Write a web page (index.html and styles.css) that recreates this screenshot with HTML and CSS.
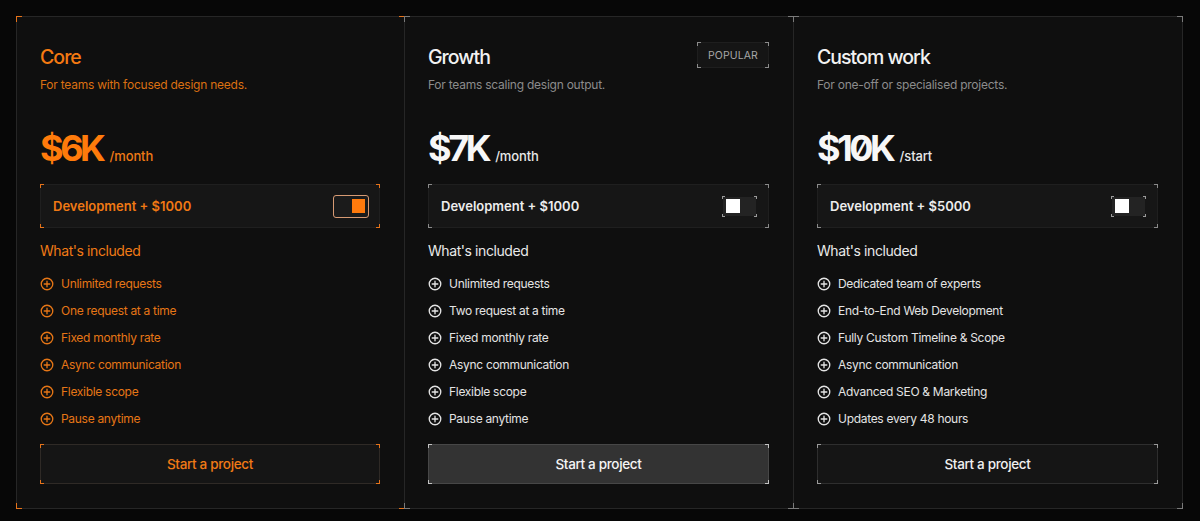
FILE: index.html
```html
<!DOCTYPE html>
<html lang="en">
<head>
<meta charset="utf-8">
<title>Pricing</title>
<link rel="stylesheet" href="styles.css">
</head>
<body>
<main class="pricing">
  <section class="card card-core ticks">
    <header class="card-head">
      <div class="head-text">
        <h2 class="title">Core</h2>
        <p class="sub">For teams with focused design needs.</p>
      </div>
    </header>
    <div class="price"><span class="amount">$6K</span><span class="per">/month</span></div>
    <div class="addon ticks"><span class="addon-label">Development + $1000</span><span class="toggle toggle-on"><span class="knob"></span></span></div>
    <h3 class="inc">What's included</h3>
    <ul class="features">
      <li><svg class="ico" viewBox="0 0 16 16"><circle cx="8" cy="8" r="6.6"/><path d="M8 4.8v6.4M4.8 8h6.4"/></svg>Unlimited requests</li>
      <li><svg class="ico" viewBox="0 0 16 16"><circle cx="8" cy="8" r="6.6"/><path d="M8 4.8v6.4M4.8 8h6.4"/></svg>One request at a time</li>
      <li><svg class="ico" viewBox="0 0 16 16"><circle cx="8" cy="8" r="6.6"/><path d="M8 4.8v6.4M4.8 8h6.4"/></svg>Fixed monthly rate</li>
      <li><svg class="ico" viewBox="0 0 16 16"><circle cx="8" cy="8" r="6.6"/><path d="M8 4.8v6.4M4.8 8h6.4"/></svg>Async communication</li>
      <li><svg class="ico" viewBox="0 0 16 16"><circle cx="8" cy="8" r="6.6"/><path d="M8 4.8v6.4M4.8 8h6.4"/></svg>Flexible scope</li>
      <li><svg class="ico" viewBox="0 0 16 16"><circle cx="8" cy="8" r="6.6"/><path d="M8 4.8v6.4M4.8 8h6.4"/></svg>Pause anytime</li>
    </ul>
    <button class="cta ticks">Start a project</button>
  </section>

  <section class="card card-growth ticks">
    <header class="card-head">
      <div class="head-text">
        <h2 class="title">Growth</h2>
        <p class="sub">For teams scaling design output.</p>
      </div>
      <span class="badge ticks">POPULAR</span>
    </header>
    <div class="price"><span class="amount">$7K</span><span class="per">/month</span></div>
    <div class="addon ticks"><span class="addon-label">Development + $1000</span><span class="toggle ticks"><span class="knob"></span></span></div>
    <h3 class="inc">What's included</h3>
    <ul class="features">
      <li><svg class="ico" viewBox="0 0 16 16"><circle cx="8" cy="8" r="6.6"/><path d="M8 4.8v6.4M4.8 8h6.4"/></svg>Unlimited requests</li>
      <li><svg class="ico" viewBox="0 0 16 16"><circle cx="8" cy="8" r="6.6"/><path d="M8 4.8v6.4M4.8 8h6.4"/></svg>Two request at a time</li>
      <li><svg class="ico" viewBox="0 0 16 16"><circle cx="8" cy="8" r="6.6"/><path d="M8 4.8v6.4M4.8 8h6.4"/></svg>Fixed monthly rate</li>
      <li><svg class="ico" viewBox="0 0 16 16"><circle cx="8" cy="8" r="6.6"/><path d="M8 4.8v6.4M4.8 8h6.4"/></svg>Async communication</li>
      <li><svg class="ico" viewBox="0 0 16 16"><circle cx="8" cy="8" r="6.6"/><path d="M8 4.8v6.4M4.8 8h6.4"/></svg>Flexible scope</li>
      <li><svg class="ico" viewBox="0 0 16 16"><circle cx="8" cy="8" r="6.6"/><path d="M8 4.8v6.4M4.8 8h6.4"/></svg>Pause anytime</li>
    </ul>
    <button class="cta cta-strong ticks">Start a project</button>
  </section>

  <section class="card card-custom ticks">
    <header class="card-head">
      <div class="head-text">
        <h2 class="title">Custom work</h2>
        <p class="sub">For one-off or specialised projects.</p>
      </div>
    </header>
    <div class="price"><span class="amount amount-zero">$10K</span><span class="per">/start</span></div>
    <div class="addon ticks"><span class="addon-label">Development + $5000</span><span class="toggle ticks"><span class="knob"></span></span></div>
    <h3 class="inc">What's included</h3>
    <ul class="features">
      <li><svg class="ico" viewBox="0 0 16 16"><circle cx="8" cy="8" r="6.6"/><path d="M8 4.8v6.4M4.8 8h6.4"/></svg>Dedicated team of experts</li>
      <li><svg class="ico" viewBox="0 0 16 16"><circle cx="8" cy="8" r="6.6"/><path d="M8 4.8v6.4M4.8 8h6.4"/></svg>End-to-End Web Development</li>
      <li><svg class="ico" viewBox="0 0 16 16"><circle cx="8" cy="8" r="6.6"/><path d="M8 4.8v6.4M4.8 8h6.4"/></svg>Fully Custom Timeline &amp; Scope</li>
      <li><svg class="ico" viewBox="0 0 16 16"><circle cx="8" cy="8" r="6.6"/><path d="M8 4.8v6.4M4.8 8h6.4"/></svg>Async communication</li>
      <li><svg class="ico" viewBox="0 0 16 16"><circle cx="8" cy="8" r="6.6"/><path d="M8 4.8v6.4M4.8 8h6.4"/></svg>Advanced SEO &amp; Marketing</li>
      <li><svg class="ico" viewBox="0 0 16 16"><circle cx="8" cy="8" r="6.6"/><path d="M8 4.8v6.4M4.8 8h6.4"/></svg>Updates every 48 hours</li>
    </ul>
    <button class="cta ticks">Start a project</button>
  </section>
</main>
</body>
</html>
```

FILE: styles.css
```css
* { box-sizing: border-box; }

html, body {
  margin: 0;
  padding: 0;
  background: #070707;
}

body {
  font-family: Inter, "Liberation Sans", sans-serif;
  color: #ececec;
  height: 521px;
  overflow: hidden;
}

.pricing {
  display: grid;
  grid-template-columns: repeat(3, 1fr);
  width: 1167px;
  padding: 0;
  margin: 16px 0 0 16px;
}

/* corner tick marks */
.ticks { position: relative; --tc: #8a8a8a; --tl: 5px; }
.ticks::after {
  content: "";
  position: absolute;
  inset: -1px;
  pointer-events: none;
  background:
    linear-gradient(var(--tc), var(--tc)) left top / var(--tl) 1px,
    linear-gradient(var(--tc), var(--tc)) left top / 1px var(--tl),
    linear-gradient(var(--tc), var(--tc)) right top / var(--tl) 1px,
    linear-gradient(var(--tc), var(--tc)) right top / 1px var(--tl),
    linear-gradient(var(--tc), var(--tc)) left bottom / var(--tl) 1px,
    linear-gradient(var(--tc), var(--tc)) left bottom / 1px var(--tl),
    linear-gradient(var(--tc), var(--tc)) right bottom / var(--tl) 1px,
    linear-gradient(var(--tc), var(--tc)) right bottom / 1px var(--tl);
  background-repeat: no-repeat;
}

.card {
  height: 493px;
  background: #0f0f0f;
  border: 1px solid #262626;
  padding: 25px 24px 24px 23px;
  display: flex;
  flex-direction: column;
  --tc: #7a7a7a;
  --tl: 6px;
}
.card + .card { margin-left: -1px; }

.card-core { --tc: #e5731a; }

.card-head {
  display: flex;
  justify-content: space-between;
  align-items: flex-start;
}

.title {
  margin: 3px 0 0;
  font-size: 19.5px;
  line-height: 24px;
  font-weight: 500;
  letter-spacing: -0.05em;
  color: #f2f2f2;
}

.sub {
  margin: 8px 0 0;
  font-size: 12px;
  line-height: 16px;
  font-weight: 400;
  letter-spacing: -0.02em;
  color: #8c8c8c;
}

.badge {
  width: 72px;
  height: 26px;
  display: flex;
  align-items: center;
  justify-content: center;
  background: #151515;
  border: 1px solid #1e1e1e;
  font-size: 10.5px;
  letter-spacing: 0.01em;
  color: #a6a6a6;
  --tc: #8c8c8c;
  --tl: 4px;
}

.price {
  margin-top: 35px;
  display: flex;
  align-items: baseline;
  height: 40px;
  line-height: 40px;
}
.amount {
  font-size: 36px;
  font-weight: 700;
  letter-spacing: -0.095em;
  color: #f7f7f7;
}
.amount-zero { font-feature-settings: "zero" 1; }
.per {
  margin-left: 7px;
  font-size: 13px;
  font-weight: 500;
  letter-spacing: -0.01em;
  color: #e8e8e8;
}

.addon {
  margin-top: 16px;
  height: 44px;
  display: flex;
  align-items: center;
  justify-content: space-between;
  padding: 0 12px 0 12px;
  background: #161616;
  border: 1px solid #1f1f1f;
  --tc: #8a8a8a;
  --tl: 4px;
}
.addon-label {
  font-family: Inter, "Liberation Sans", sans-serif;
  font-weight: 600;
  font-size: 13px;
  color: #ededed;
  letter-spacing: 0;
}

.toggle {
  width: 33px;
  height: 19px;
  margin-right: 0;
  background: #232323;
  display: flex;
  align-items: center;
  padding: 0 0 0 3px;
  --tc: #9a9a9a;
  --tl: 3px;
}
.toggle .knob {
  width: 14px;
  height: 14px;
  background: #ffffff;
}
.toggle-on {
  width: 36px;
  height: 23px;
  margin-right: -2px;
  border: 1.5px solid #d79a73;
  border-radius: 3px;
  background: #1b1b1b;
  justify-content: flex-end;
  padding: 0 3px 0 0;
}
.toggle-on .knob {
  width: 13px;
  height: 14px;
  background: #ff7a0c;
}

.inc {
  margin: 14px 0 0;
  font-size: 14px;
  line-height: 18px;
  font-weight: 400;
  letter-spacing: -0.03em;
  color: #e9e9e9;
}

.features {
  list-style: none;
  margin: 10px 0 0;
  padding: 0;
}
.features li {
  display: flex;
  align-items: center;
  height: 27px;
  font-size: 12px;
  letter-spacing: -0.025em;
  color: #e4e4e4;
}
.ico {
  width: 14px;
  height: 14px;
  margin: 0 7px 0 0;
  fill: none;
  stroke: currentColor;
  stroke-width: 1.5;
  stroke-linecap: round;
}

.cta {
  margin-top: auto;
  height: 40px;
  width: 100%;
  background: #151515;
  border: 1px solid #2e2e2e;
  color: #f0f0f0;
  font-family: Inter, "Liberation Sans", sans-serif;
  font-size: 13.5px;
  font-weight: 550;
  letter-spacing: -0.025em;
  cursor: pointer;
  --tc: #9a9a9a;
  --tl: 4px;
}
.cta-strong {
  background: #333333;
  border-color: #474747;
  color: #f5f5f5;
  --tc: #c4c4c4;
}

/* Core (highlighted in orange) */
.card-core .title { color: #f47a12; }
.card-core .sub { color: #db7012; }
.card-core .amount { color: #ff7b0b; }
.card-core .per { color: #ef7a16; }
.card-core .addon { --tc: #e5731a; }
.card-core .addon-label { color: #f07914; }
.card-core .inc { color: #ef7a16; }
.card-core .features li { color: #e67616; }
.card-core .cta { color: #f07a16; --tc: #e5731a; border-color: #2f2a26; }
```
